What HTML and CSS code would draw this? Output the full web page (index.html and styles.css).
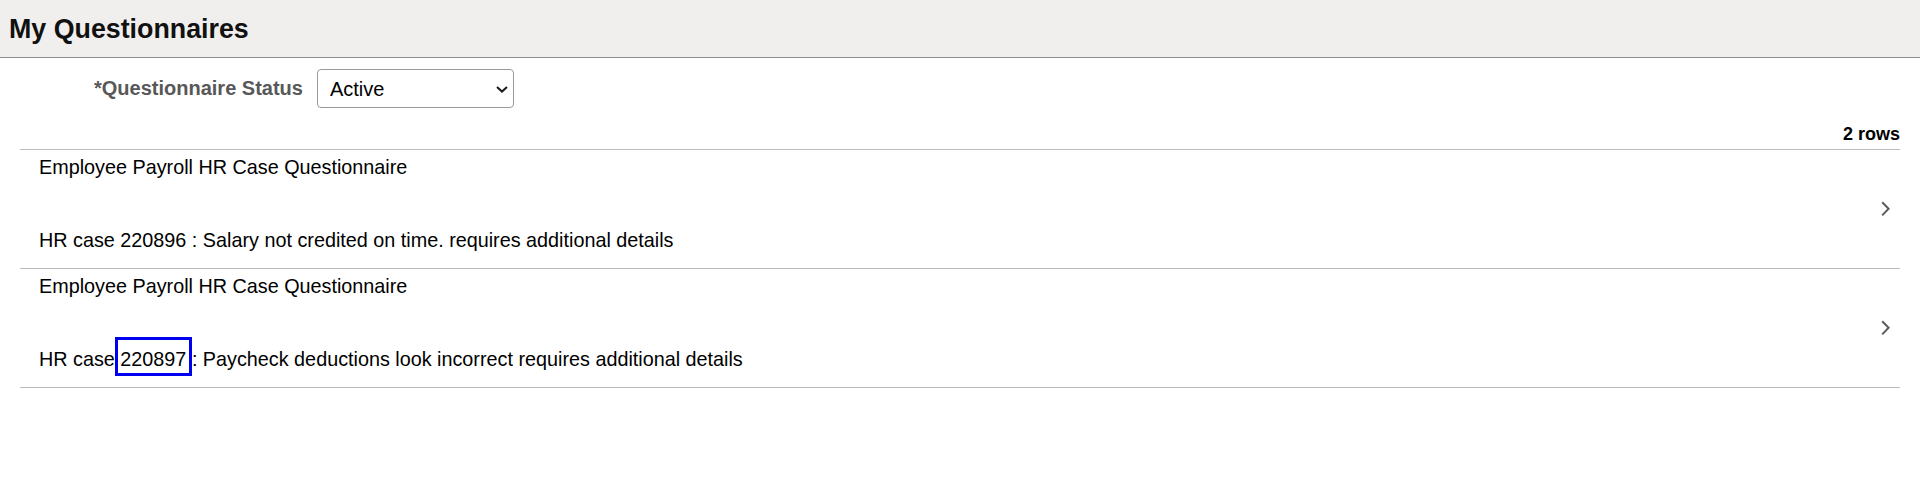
FILE: index.html
```html
<!DOCTYPE html>
<html lang="en">
<head>
<meta charset="utf-8">
<title>My Questionnaires</title>
<link rel="stylesheet" href="styles.css">
</head>
<body>
<header class="page-header">
  <h1 class="page-title">My Questionnaires</h1>
</header>
<div class="filter">
  <label class="filter-label" for="status">*Questionnaire Status</label>
  <div class="select-wrap">
    <select id="status" class="select">
      <option>Active</option>
    </select>
    <svg class="select-arrow" width="12" height="7" viewBox="0 0 12 7"><path d="M1 1 L6 5.6 L11 1" fill="none" stroke="#1a1a1a" stroke-width="2"/></svg>
  </div>
</div>
<div class="count">2 rows</div>
<ul class="list">
  <li class="row">
    <div class="row-text">
      <div class="row-title">Employee Payroll HR Case Questionnaire</div>
      <div class="row-desc">HR case 220896 : Salary not credited on time. requires additional details</div>
    </div>
    <svg class="row-chevron" width="9" height="16" viewBox="0 0 9 16"><path d="M1.2 1.2 L7.6 7.8 L1.2 14.4" fill="none" stroke="#5c5c5c" stroke-width="2"/></svg>
  </li>
  <li class="row">
    <div class="row-text">
      <div class="row-title">Employee Payroll HR Case Questionnaire</div>
      <div class="row-desc">HR case<span class="focus"> 220897 </span>: Paycheck deductions look incorrect requires additional details</div>
    </div>
    <svg class="row-chevron" width="9" height="16" viewBox="0 0 9 16"><path d="M1.2 1.2 L7.6 7.8 L1.2 14.4" fill="none" stroke="#5c5c5c" stroke-width="2"/></svg>
  </li>
</ul>
</body>
</html>
```
FILE: styles.css
```css
html, body {
  margin: 0;
  padding: 0;
  background: #ffffff;
}
body {
  font-family: "Liberation Sans", Arial, sans-serif;
  color: #000000;
}
.page-header {
  height: 57px;
  background: #f0efee;
  border-bottom: 1px solid #8c8c8c;
  display: flex;
  align-items: center;
  padding-left: 9px;
}
.page-title {
  margin: 0;
  font-size: 26.8px;
  line-height: 30px;
  font-weight: bold;
  color: #111111;
}
.filter {
  display: flex;
  align-items: center;
  gap: 14px;
  padding: 11px 0 0 94px;
}
.filter-label {
  font-size: 20px;
  font-weight: bold;
  color: #585858;
}
.select-wrap {
  position: relative;
  width: 197px;
  height: 39px;
}
.select {
  appearance: none;
  -webkit-appearance: none;
  box-sizing: border-box;
  width: 197px;
  height: 39px;
  margin: 0;
  padding: 0 30px 0 12px;
  border: 1px solid #9a9a9a;
  border-radius: 4px;
  background: #ffffff;
  font-family: "Liberation Sans", Arial, sans-serif;
  font-size: 20px;
  color: #000000;
}
.select-arrow {
  position: absolute;
  right: 6px;
  top: 17px;
  pointer-events: none;
}
.count {
  margin-top: 16px;
  padding-right: 20px;
  text-align: right;
  font-size: 18px;
  line-height: 21px;
  font-weight: bold;
  color: #000000;
}
.list {
  list-style: none;
  margin: 4px 20px 0;
  padding: 0;
}
.row {
  display: flex;
  align-items: center;
  justify-content: space-between;
  border-top: 1px solid #bcbcbc;
  padding: 0 10px 0 19px;
}
.row:last-child {
  border-bottom: 1px solid #bcbcbc;
}
.row-text {
  padding: 6px 0 16px;
  font-size: 19.8px;
  line-height: 23px;
}
.row-desc {
  margin-top: 50px;
}
.focus {
  padding: 11px 0 6px;
  outline: 3px solid #0000f0;
  outline-offset: -3px;
}
.row-chevron {
  display: block;
  flex: none;
}
```
